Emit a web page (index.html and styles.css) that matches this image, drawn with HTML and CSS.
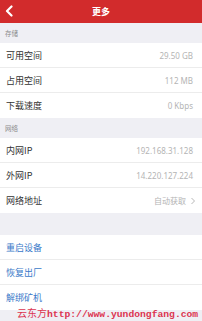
FILE: index.html
```html
<!DOCTYPE html>
<html>
<head>
<meta charset="utf-8">
<link rel="stylesheet" href="styles.css">
</head>
<body>
<div class="page">
  <header class="bar">
    <svg class="back" width="10" height="12" viewBox="0 0 10 12"><path d="M7.5 1.5 L3 6 L7.5 10.5" fill="none" stroke="#fff" stroke-width="2.2" stroke-linecap="round" stroke-linejoin="round"/></svg>
    <div class="title">更多</div>
  </header>
  <div class="section">存储</div>
  <div class="list">
    <div class="row"><span class="label">可用空间</span><span class="value">29.50 GB</span></div>
    <div class="row"><span class="label">占用空间</span><span class="value">112 MB</span></div>
    <div class="row"><span class="label">下载速度</span><span class="value">0 Kbps</span></div>
  </div>
  <div class="section s2">网络</div>
  <div class="list">
    <div class="row"><span class="label">内网IP</span><span class="value">192.168.31.128</span></div>
    <div class="row"><span class="label">外网IP</span><span class="value">14.220.127.224</span></div>
    <div class="row"><span class="label">网络地址</span><span class="value">自动获取<svg class="chev" width="6" height="8" viewBox="0 0 6 8"><path d="M1.5 1 L4.5 4 L1.5 7" fill="none" stroke="#b8b8b8" stroke-width="1"/></svg></span></div>
  </div>
  <div class="gap"></div>
  <div class="list">
    <div class="row"><span class="action">重启设备</span></div>
    <div class="row"><span class="action">恢复出厂</span></div>
    <div class="row"><span class="action">解绑矿机</span></div>
  </div>
  <div class="foot"></div>
  <div class="mark"><span class="cn">云东方</span>http://www.yundongfang.com</div>
</div>
</body>
</html>
```

FILE: styles.css
```css
* { box-sizing: border-box; margin: 0; padding: 0; }
html, body { width: 202px; height: 321px; overflow: hidden; }
body { background: #efeff4; font-family: "Noto Sans CJK SC", "Noto Sans", sans-serif; }
.page { position: relative; width: 202px; height: 321px; }
.bar { height: 23px; background: #d22b2c; display: flex; align-items: center; justify-content: center; position: relative; }
.back { position: absolute; left: 4px; top: 5px; }
.title { color: #fff; font-size: 9px; font-weight: bold; line-height: 23px; }
.section { height: 20px; padding-left: 5px; font-size: 6.5px; color: #8a8a8a; display: flex; align-items: center; }
.list { background: #fff; }
.row { height: 25px; display: flex; align-items: center; justify-content: space-between; padding: 0 9px 0 6px; border-bottom: 1px solid #ececec; }
.row:last-child { border-bottom: none; }
.label { font-size: 9px; color: #333; }
.value { font-size: 8px; color: #b4b4b4; display: flex; align-items: center; font-family: "Noto Sans", "Noto Sans CJK SC", sans-serif; }
.chev { margin-left: 4px; margin-right: -3px; }
.action { font-size: 9px; color: #3a7ac9; }
.gap { height: 22px; }
.mark { position: absolute; left: 17px; top: 307px; font-family: "Liberation Mono", monospace; font-size: 9.7px; font-weight: bold; color: #dc3450; white-space: nowrap; line-height: 12px; }
.mark .cn { font-family: "Noto Sans CJK SC", serif; font-weight: normal; font-size: 10px; }
```
